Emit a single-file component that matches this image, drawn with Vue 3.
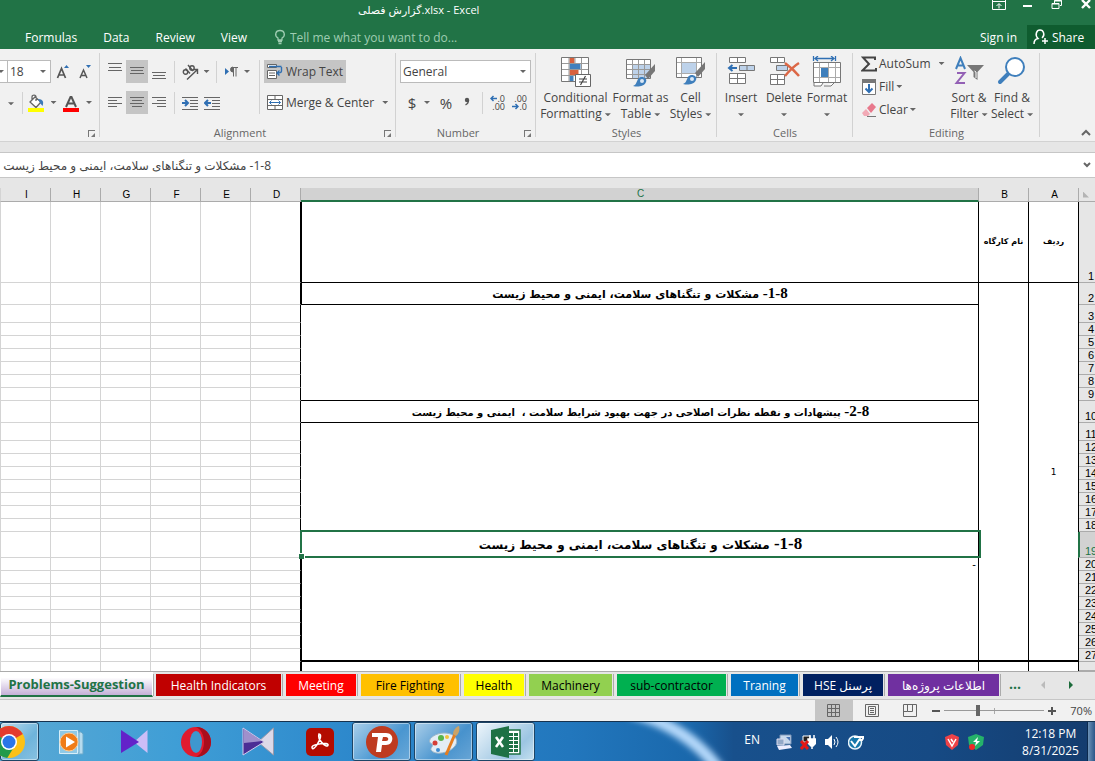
<template>
  <div class="window">
    <header class="title-bar">
      <h1 class="title">گزارش فصلی.xlsx - Excel</h1>
      <div class="window-buttons">
        <button aria-label="Ribbon display options">
          <svg width="14" height="12" viewBox="0 0 14 12"><path d="M.5 0v9.500h13V0M.5 1.500h13M7 8.500V4M4.500 6L7 3.500 9.500 6" fill="none" stroke="#fff" /></svg>
        </button>
        <button aria-label="Minimize">
          <svg width="14" height="12" viewBox="0 0 14 12"><path d="M2 5h9v2H2z" fill="#fff" /></svg>
        </button>
        <button aria-label="Restore">
          <svg width="14" height="12" viewBox="0 0 14 12"><path d="M4.500 3V.500h7v5H10M2 3.500h7v5H2zM4 1h8M2 4h7" fill="none" stroke="#fff" /></svg>
        </button>
        <button aria-label="Close">
          <svg width="14" height="12" viewBox="0 0 14 12"><path d="M3 0l8 8M11 0L3 8" stroke="#fff" stroke-width="2.400" /></svg>
        </button>
      </div>
    </header>

    <nav class="menu">
      <a v-for="item in menu" :key="item" href="#">{{ item }}</a>
      <label class="tell-me">
        <svg width="12" height="16" viewBox="0 0 12 16"><path d="M4 11V9C0 6.500 1.500 1.500 6 1.500S12 6.500 8 9v2zM4 12.500h4M4.500 14.500h3" fill="none" stroke="#9fcdb2" stroke-width="1.300" /></svg>
        <input type="text" placeholder="Tell me what you want to do..." aria-label="Tell me what you want to do" />
      </label>
      <a class="sign-in" href="#">Sign in</a>
      <button class="share">
        <svg width="16" height="16" viewBox="0 0 16 16"><path d="M1 15c0-3 1.500-5 4-5.500C1.500 6 3.500 1 7 1s5.500 5 2 8M9 12h6M12 9v6" fill="none" stroke="#fff" stroke-width="1.500" /></svg>
        Share
      </button>
    </nav>

    <section class="ribbon">
      <div class="group font-group">
        <div class="row">
          <span class="combo-tail"><i class="caret"></i></span>
          <span class="combo size-combo">
            <input v-model="fontSize" type="text" aria-label="Font size" /><i class="caret"></i>
          </span>
          <button class="tool" aria-label="Increase font size">
            <svg width="14" height="16" viewBox="0 0 14 16"><path d="M1.500 14L5.500 4.500 9.500 14M3 11h5" fill="none" stroke="#555" stroke-width="1.700" /><path d="M8 4l2.500-3L13 4z" fill="#2f6fb3" /></svg>
          </button>
          <button class="tool" aria-label="Decrease font size">
            <svg width="14" height="16" viewBox="0 0 14 16"><path d="M2 14l3.500-8L9 14M3.500 11.500h4" fill="none" stroke="#555" stroke-width="1.500" /><path d="M8 1l2.500 3L13 1z" fill="#2f6fb3" /></svg>
          </button>
        </div>
        <div class="row">
          <span class="border-tail"><i class="caret"></i></span>
          <i class="sep"></i>
          <button class="split fill-color" aria-label="Fill color">
            <svg width="18" height="18" viewBox="0 0 18 18"><path d="M3 8l5-5 6 5-5 5.500zM5 6V3c0-2.500 4-2.500 4 0v4" fill="#fff" stroke="#666" stroke-width="1.300" /><path d="M11 5c5 0 6 3 4.500 7L13 9z" fill="#3c7ab8" /><path d="M1 14h16v4H1z" fill="#ff0" /></svg>
            <i class="caret"></i>
          </button>
          <button class="split font-color" aria-label="Font color">
            <svg width="18" height="18" viewBox="0 0 18 18"><path d="M4 13L8.500 3h1L14 13M6 9.500h6" fill="none" stroke="#555" stroke-width="2" /><path d="M1 14h16v4H1z" fill="red" /></svg>
            <i class="caret"></i>
          </button>
        </div>
        <i class="launcher"></i>
      </div>

      <div class="group align-group">
        <div class="columns">
          <div class="align-tools">
            <div class="row">
              <button v-for="a in vertical" :key="a.name" class="align" :class="{ active: a.active }" :aria-label="a.name">
                <svg width="14" height="23" viewBox="0 0 14 23"><path :d="a.path" stroke="#666" /></svg>
              </button>
              <i class="sep"></i>
              <button class="split wide" aria-label="Orientation">
                <svg width="17" height="16" viewBox="0 0 17 16"><g fill="none" stroke="#555" stroke-width="1.400"><circle cx="3.500" cy="8" r="2.200" /><path d="M3.500 4.500L8 9.500M6 1l5 6" /><circle cx="10" cy="4" r="2.200" /><path d="M5 15.500L15 6M11 5.500h4.500V10" /></g></svg>
                <i class="caret"></i>
              </button>
              <i class="sep"></i>
              <button class="split wide" aria-label="Text direction">
                <svg width="14" height="14" viewBox="0 0 14 14"><path d="M0 3l4 3.500L0 10z" fill="#2f6fb3" /><path d="M8 7a2.500 2.500 0 0 1 0-5zM8.500 2v9.500M11 2v9.500M8 2.500h5" fill="#666" stroke="#666" /></svg>
                <i class="caret"></i>
              </button>
            </div>
            <div class="row">
              <button v-for="a in horizontal" :key="a.name" class="align" :class="{ active: a.active }" :aria-label="a.name">
                <svg width="14" height="23" viewBox="0 0 14 23"><path :d="a.path" stroke="#666" /></svg>
              </button>
              <i class="sep"></i>
              <button class="indent" aria-label="Increase indent">
                <svg width="16" height="14" viewBox="0 0 16 14"><path d="M0 1.500h16M8 4.500h8M8 7.500h8M8 10.500h8M0 13.500h16" stroke="#666" /><path d="M0 7h5M3 4l3 3-3 3" fill="none" stroke="#2f6fb3" stroke-width="2" /></svg>
              </button>
              <button class="indent" aria-label="Decrease indent">
                <svg width="16" height="14" viewBox="0 0 16 14"><path d="M0 1.500h16M8 4.500h8M8 7.500h8M8 10.500h8M0 13.500h16" stroke="#666" /><path d="M2 7h5M4 4L1 7l3 3" fill="none" stroke="#2f6fb3" stroke-width="2" /></svg>
              </button>
            </div>
          </div>
          <i class="sep tall"></i>
          <div class="wrap-tools">
            <button class="labelled active">
              <svg width="17" height="16" viewBox="0 0 17 16"><path d="M.5.500h9v3h-9zM.5 6.500h9v8h-9zM2 9h6M2 11.500h6" fill="#fff" stroke="#666" /><path d="M2 2.500h12.500M14.500 3v4c0 2-1.500 2-4 2M12.500 6.500L10 9l2.500 2.500" fill="none" stroke="#2f6fb3" stroke-width="1.400" /></svg>
              Wrap Text
            </button>
            <button class="labelled">
              <svg width="17" height="16" viewBox="0 0 17 16"><path d="M.5.500h15v14H.5zM.5 4.500h15M.5 10.500h15M8 .5v4M8 10.500v4" fill="#fff" stroke="#666" /><path d="M2.500 7.500h11M4.500 5.500l-2 2 2 2M11.500 5.500l2 2-2 2" fill="none" stroke="#2f6fb3" /></svg>
              Merge &amp; Center <i class="caret"></i>
            </button>
          </div>
        </div>
        <span class="group-name">Alignment</span>
        <i class="launcher"></i>
      </div>

      <div class="group number-group">
        <div class="row">
          <span class="combo format-combo">
            <input v-model="format" type="text" aria-label="Number format" /><i class="caret"></i>
          </span>
        </div>
        <div class="row">
          <button class="symbol">$</button>
          <i class="caret"></i>
          <button class="symbol percent">%</button>
          <button class="comma" aria-label="Comma style">
            <svg width="6" height="12" viewBox="0 0 6 12"><circle cx="3" cy="3" r="2.200" fill="#555" /><path d="M4.500 3c0 2.500-1 4-3 4.800" fill="none" stroke="#555" stroke-width="1.400" /></svg>
          </button>
          <i class="sep"></i>
          <button class="decimal" aria-label="Increase decimal">
            <span><svg width="7" height="7" viewBox="0 0 7 7"><path d="M7 3.500H1M3.500 1L1 3.500 3.500 6" fill="none" stroke="#2f6fb3" stroke-width="1.500" /></svg>.0</span>
            <span>.00</span>
          </button>
          <button class="decimal" aria-label="Decrease decimal">
            <span>.00</span>
            <span><svg width="7" height="7" viewBox="0 0 7 7"><path d="M0 3.500h6M3.500 1L6 3.500 3.500 6" fill="none" stroke="#2f6fb3" stroke-width="1.500" /></svg>.0</span>
          </button>
        </div>
        <span class="group-name">Number</span>
        <i class="launcher"></i>
      </div>

      <div class="group styles-group">
        <div class="big-buttons">
          <button class="big conditional">
            <svg width="32" height="32" viewBox="0 0 32 32"><path d="M1.500 1.500h27v24h-27z" fill="#fff" stroke="#777" /><path d="M9.500 2h5v5h-5zM9.500 14h9v5h-9z" fill="#d8603d" /><path d="M9.500 8h11v5h-11zM9.500 20h4v5h-4z" fill="#4180bd" /><path d="M2 7.500h26M2 13.500h26M2 19.500h26M9 2v23M15 2v5M21.500 2v23" stroke="#999" fill="none" /><path d="M15.500 18.500h15v12h-15z" fill="#fff" stroke="#666" /><path d="M19 23h8M19 26h8M25.500 20l-5 9" stroke="#444" stroke-width="1.200" /></svg>
            <span>Conditional<br />Formatting <i class="caret"></i></span>
          </button>
          <button class="big format-table">
            <svg width="32" height="32" viewBox="0 0 32 32"><path d="M1.500 3.500h24v19h-24z" fill="#fff" stroke="#777" /><path d="M8 9h17v13H8z" fill="#bdd2ea" /><path d="M2 8.500h23M2 13.500h23M2 18.500h23M7.500 4v18M13.500 4v18M19.500 4v18" stroke="#999" /><path d="M20 19L30 8v7l-7 8z" fill="#777" /><path d="M8 30c3-1 3-3 5-7 3-4 10-1 8 3-2 5-9 5-13 4z" fill="#3f7fbc" /><circle cx="17" cy="25" r="2" fill="#dbe8f5" /></svg>
            <span>Format as<br />Table <i class="caret"></i></span>
          </button>
          <button class="big cell-styles">
            <svg width="32" height="32" viewBox="0 0 32 32"><path d="M1.500 1.500h25v20h-25z" fill="#fff" stroke="#777" /><path d="M2 6.500h24M2 17.500h24M6.500 2v19M21.500 2v19" stroke="#aaa" /><path d="M7 7h14v10H7z" fill="#bdd2ea" /><path d="M20 17L30 6v7l-7 8z" fill="#777" /><path d="M8 28c3-1 3-3 5-7 3-4 10-1 8 3-2 5-9 5-13 4z" fill="#3f7fbc" /><circle cx="17" cy="23" r="2" fill="#dbe8f5" /></svg>
            <span>Cell<br />Styles <i class="caret"></i></span>
          </button>
        </div>
        <span class="group-name">Styles</span>
      </div>

      <div class="group cells-group">
        <div class="big-buttons">
          <button class="big">
            <svg width="32" height="32" viewBox="0 0 32 32"><path d="M4.500 1.500h16v5h-16zM12.500 1.500v5M4.500 17.500h16v10h-16zM4.500 22.500h16M12.500 17.500v10" fill="#fff" stroke="#777" /><path d="M14.500 9.500h15v5h-15zM22 9.500v5" fill="#bdd2ea" stroke="#777" /><path d="M4 12h8M7.500 9L4 12l3.500 3" fill="none" stroke="#2f6fb3" stroke-width="2" /></svg>
            <span>Insert<br /><i class="caret"></i></span>
          </button>
          <button class="big">
            <svg width="32" height="32" viewBox="0 0 32 32"><path d="M2.500 1.500h14v5h-14zM9.500 1.500v5M2.500 18.500h14v10h-14zM2.500 23.500h14M9.500 18.500v10" fill="#fff" stroke="#777" /><path d="M8.500 9.500h11v5h-11z" fill="#bdd2ea" stroke="#777" /><path d="M17 7c4 3 9 7 14 13M31 7c-5 3-9 7-14 13" fill="none" stroke="#dc6847" stroke-width="2.500" /></svg>
            <span>Delete<br /><i class="caret"></i></span>
          </button>
          <button class="big">
            <svg width="32" height="32" viewBox="0 0 32 32"><path d="M2.500 6.500h27v20h-27z" fill="#fff" stroke="#777" /><path d="M3 11.500h26M3 21.500h26M8.500 7v19M17.500 7v19M24.500 7v19" stroke="#aaa" /><path d="M10 12h7v9h-7z" fill="#3f7fbc" /><path d="M3 27v3h7l2-3M13 30h7l3-3" fill="#fff" stroke="#777" /><path d="M2.500 0v5M24.500 0v5M4 2.500h19M7 0L4 2.500 7 5M20 0l3 2.500L20 5" fill="none" stroke="#2f6fb3" stroke-width="1.300" /></svg>
            <span>Format<br /><i class="caret"></i></span>
          </button>
        </div>
        <span class="group-name">Cells</span>
      </div>

      <div class="group editing-group">
        <div class="columns">
          <div class="small-buttons">
            <button class="labelled sum">
              <svg width="16" height="16" viewBox="0 0 16 16"><path d="M14 4V1.500H2L8 8l-6.500 6.500H15V12" fill="none" stroke="#444" stroke-width="2" /></svg>
              AutoSum <i class="caret"></i>
            </button>
            <button class="labelled">
              <svg width="16" height="16" viewBox="0 0 16 16"><path d="M1.500.500h13v15h-13z" fill="#fff" stroke="#777" /><path d="M1 0h14v4H1z" fill="#777" /><path d="M8 5v8M4.500 9.500L8 13l3.500-3.500" fill="none" stroke="#2f6fb3" stroke-width="2" /></svg>
              Fill <i class="caret"></i>
            </button>
            <button class="labelled">
              <svg width="16" height="16" viewBox="0 0 16 16"><path d="M6 6l5-5 4 4-5 6z" fill="#e8798c" /><path d="M1 11l4-4 4 5-2 2H3z" fill="#f2aab6" /><path d="M6 14.500h9" stroke="#777" /></svg>
              Clear <i class="caret"></i>
            </button>
          </div>
          <div class="big-buttons">
            <button class="big sort">
              <svg width="32" height="32" viewBox="0 0 32 32"><path d="M3 13L7.500 2 12 13M4.500 9.500h6" fill="none" stroke="#3f7fbc" stroke-width="2" /><path d="M4 17h7.500L3.500 27H12" fill="none" stroke="#9360b5" stroke-width="2" /><path d="M14 9h17l-6.500 7v8l-4-3v-5z" fill="#777" /><path d="M21.500 15l1.500 1v6" stroke="#fff" fill="none" /></svg>
              <span>Sort &amp;<br />Filter <i class="caret"></i></span>
            </button>
            <button class="big find">
              <svg width="32" height="32" viewBox="0 0 32 32"><path d="M13 17L4 26" stroke="#3f7fbc" stroke-width="4" stroke-linecap="round" /><circle cx="19" cy="11" r="9" fill="#fff" stroke="#3f7fbc" stroke-width="2" /></svg>
              <span>Find &amp;<br />Select <i class="caret"></i></span>
            </button>
          </div>
        </div>
        <span class="group-name">Editing</span>
      </div>
      <button class="collapse" aria-label="Collapse the ribbon">
        <svg width="10" height="8" viewBox="0 0 10 8"><path d="M1 6l4-4 4 4" fill="none" stroke="#666" stroke-width="2" /></svg>
      </button>
    </section>

    <section class="formula-bar">
      <input v-model="formula" type="text" dir="rtl" aria-label="Formula bar" />
      <button aria-label="Expand formula bar">
        <svg width="8" height="8" viewBox="0 0 8 8"><path d="M1 2l3 3 3-3" fill="none" stroke="#666" stroke-width="2" /></svg>
      </button>
    </section>

    <main class="sheet">
      <table>
        <colgroup>
          <col class="col-first" />
          <col v-for="c in 5" :key="c" class="col-small" />
          <col />
          <col class="col-small" />
          <col class="col-small" />
          <col class="col-head" />
        </colgroup>
        <thead>
          <tr>
            <th v-for="c in columns" :key="c" :class="{ current: c === 'C' }" scope="col">{{ c }}</th>
            <th class="corner"><i></i></th>
          </tr>
        </thead>
        <tbody>
          <tr v-for="row in rows" :key="row.n" :style="{ height: row.h + 'px' }">
            <td v-for="c in 6" :key="c" class="blank"></td>
            <td v-if="row.span" class="cell-c" :class="row.cls" :rowspan="row.span" dir="rtl">
              <template v-if="row.text"><b class="num">{{ row.num }}</b> {{ row.text }}</template>
              <template v-if="row.dash">-</template>
              <div v-if="row.cls === 'selected'" class="selection"></div>
            </td>
            <td v-if="row.b !== undefined" class="cell-ab" :rowspan="row.abSpan">{{ row.b }}</td>
            <td v-if="row.a !== undefined" class="cell-ab" :rowspan="row.abSpan">{{ row.a }}</td>
            <th scope="row" :class="{ current: row.n === 19 }">{{ row.n < 28 ? row.n : '' }}</th>
          </tr>
        </tbody>
      </table>
    </main>

    <nav class="sheet-tabs">
      <button class="current-tab">Problems-Suggestion</button>
      <div v-for="tab in tabs" :key="tab.name" class="tab">
        <button dir="auto" :class="{ dark: tab.dark }" :style="{ width: tab.width + 'px', background: tab.color }">{{ tab.name }}</button>
      </div>
      <button class="more">...</button>
      <button class="arrow left" aria-label="Previous sheet"></button>
      <button class="arrow right" aria-label="Next sheet"></button>
    </nav>

    <footer class="status">
      <button class="view active" aria-label="Normal">
        <svg width="14" height="13" viewBox="0 0 14 13"><path d="M.5.500h12v12H.5zM.5 4.500h12M.5 8.500h12M4.500.500v12M8.500.500v12" fill="none" stroke="#666" /></svg>
      </button>
      <button class="view" aria-label="Page layout">
        <svg width="14" height="13" viewBox="0 0 14 13"><path d="M.5.500h13v12H.5zM3.500 2.500h7v8h-7zM5 4.500h4M5 6.500h4M5 8.500h4" fill="none" stroke="#666" /></svg>
      </button>
      <button class="view" aria-label="Page break preview">
        <svg width="14" height="13" viewBox="0 0 14 13"><path d="M.5.500h13v12H.5zM4.500.500v7h5v-7M.5 7.500h4" fill="none" stroke="#666" /></svg>
      </button>
      <button class="zoom-step minus" aria-label="Zoom out"></button>
      <input v-model="zoom" type="range" min="10" max="190" aria-label="Zoom" />
      <button class="zoom-step plus" aria-label="Zoom in"></button>
      <span class="zoom-value">{{ zoom }}%</span>
    </footer>

    <div class="taskbar">
      <svg class="swoosh" width="160" height="40" viewBox="0 0 160 40">
        <defs><filter id="soft"><feGaussianBlur stdDeviation="3" /></filter></defs>
        <path d="M14 -10Q74 5 106 52" fill="none" stroke="#b4d8fa" stroke-width="12" filter="url(#soft)" />
      </svg>
      <button class="app open chrome" aria-label="Chrome">
        <svg width="32" height="32" viewBox="0 0 32 32"><circle cx="16" cy="16" r="16" fill="#fbc116" /><path d="M16 16L2.200 8a16 16 0 0 1 27.600 0z" fill="#e33b2e" /><path d="M2.200 8a16 16 0 0 0 12 24L22 19.500 16 16z" fill="#229a4a" /><circle cx="16" cy="16" r="8" fill="#fff" /><circle cx="16" cy="16" r="6.500" fill="#2a75e8" /></svg>
      </button>
      <button class="app" aria-label="Media Player">
        <svg width="30" height="28" viewBox="0 0 30 28"><path d="M7 4h17l2 2v20H7zM5 3h17v22H5z" fill="#b6dbee" stroke="#6ba9cb" /><path d="M2.500 2.500h18v23h-18z" fill="#8fc9e6" stroke="#d6eef9" /><circle cx="12" cy="14" r="9" fill="#f07c18" stroke="#ffc98f" /><path d="M9 8.500l9 5.500-9 5.500z" fill="#fff" /></svg>
      </button>
      <button class="app" aria-label="Player">
        <svg width="28" height="26" viewBox="0 0 28 26"><path d="M27.500 1v23L14 13z" fill="#cdbdf7" /><path d="M1 1l18 12L1 24z" fill="#6322c9" /></svg>
      </button>
      <button class="app" aria-label="Opera">
        <svg width="32" height="32" viewBox="0 0 32 32"><ellipse cx="16" cy="16" rx="15" ry="15" fill="#e01b2f" /><path d="M16 1c9 0 15 7 15 15s-6 15-15 15c5-2 8-8 8-15S21 3 16 1z" fill="#a80e1c" /><ellipse cx="16" cy="16" rx="6" ry="11" fill="#3e97cf" /></svg>
      </button>
      <button class="app" aria-label="KMPlayer">
        <svg width="32" height="30" viewBox="0 0 32 30"><path d="M31.500 1v27L16 15z" fill="#ddd9e8" stroke="#99a" /><path d="M1 1l21 14L1 28z" fill="#4b2e95" stroke="#d3cbed" /><path d="M2 2l18 12-18 2z" fill="#c3bbe4" opacity=".7" /></svg>
      </button>
      <button class="app" aria-label="Acrobat">
        <svg width="28" height="28" viewBox="0 0 28 28"><rect width="28" height="28" rx="5" fill="#b30b00" /><path d="M13 6c3 0 1 6-1 9-2 4-6 8-6 4 1-3 17-5 16-2-1 4-11-5-9-11z" fill="none" stroke="#fff" stroke-width="1.600" /></svg>
      </button>
      <button class="app open" aria-label="Psiphon">
        <svg width="32" height="32" viewBox="0 0 32 32"><circle cx="16" cy="16" r="16" fill="#be3b20" /><path d="M6 7h14c9 0 8 12 0 12h-4l-1 7h-5l2-15H6zM17 11l-1 4h4c3 0 3-4 0-4z" fill="#fff" fill-rule="evenodd" /></svg>
      </button>
      <button class="app open" aria-label="Paint">
        <svg width="34" height="34" viewBox="0 0 34 34"><path d="M17 8c12 0 15 8 11 13-5 7-20 10-24 4-1-2 3-4 1-6-7-3 2-11 12-11z" fill="#e3edf5" stroke="#9ab6c9" /><circle cx="14" cy="13" r="3" fill="#59b44c" /><circle cx="8" cy="18" r="2.500" fill="#d53e36" /><circle cx="11" cy="25" r="2" fill="#3c8ad1" /><circle cx="20" cy="12" r="2" fill="#f3c33d" /><path d="M19 30L28 9" stroke="#e47d20" stroke-width="3" /><path d="M26 9c0-4 4-8 6-8 1 3 0 8-3 10z" fill="#c9a368" /></svg>
      </button>
      <button class="app open bright" aria-label="Excel">
        <svg width="32" height="32" viewBox="0 0 32 32"><path d="M16 4h14v24H16z" fill="#fff" stroke="#1e7145" stroke-width="1.500" /><path d="M19 7h4v3h-4zM24 7h4v3h-4zM19 11h4v3h-4zM24 11h4v3h-4zM19 15h4v3h-4zM24 15h4v3h-4zM19 19h4v3h-4zM24 19h4v3h-4zM19 23h4v3h-4zM24 23h4v3h-4z" fill="#1e7145" /><path d="M1 4l18-4v32L1 28z" fill="#1e7145" /><path d="M6 11l7 10M13 11L6 21" stroke="#fff" stroke-width="2.500" /></svg>
      </button>

      <div class="tray">
        <span class="lang">EN</span>
        <svg width="16" height="16" viewBox="0 0 16 16"><path d="M4 1h11v9H4z" fill="#c8d8ec" stroke="#7c95b7" /><path d="M1 5h7v6H1z" fill="#93a9c8" stroke="#dde" /><path d="M1 12l13-1 2 3-13 2z" fill="#eef" /><path d="M10 3h4v4z" fill="#4a74b4" /></svg>
        <svg width="16" height="16" viewBox="0 0 16 16"><path d="M3 2h7v6H3z" fill="#222" stroke="#fff" /><path d="M10 1v4M14 1v4M8 5h8v4l-3 3h-2L8 9zM12 11v4" fill="#fff" stroke="#fff" stroke-width="1.500" /><path d="M1 7l7 8M8 7l-7 8" stroke="#e31717" stroke-width="3" /></svg>
        <svg width="16" height="16" viewBox="0 0 16 16"><path d="M1 5h3l4-4v14l-4-4H1z" fill="#fff" /><path d="M10 5q2 3 0 6M12 3q4 5 0 10" fill="none" stroke="#fff" /></svg>
        <svg class="last-tool" width="16" height="16" viewBox="0 0 16 16"><circle cx="7" cy="8.500" r="6.500" fill="#1778aa" stroke="#e8f4fb" stroke-width="1.500" /><path d="M6 3h10l-2 3h-3l-4 6-4-5" fill="none" stroke="#fff" stroke-width="2" /></svg>
        <svg width="16" height="16" viewBox="0 0 16 16"><path d="M8 0l7 3-1 8-6 5-6-5L1 3z" fill="#ee4247" /><path d="M4 5l4 7 4-7M7 5l2 3" fill="none" stroke="#fff" stroke-width="1.500" /></svg>
        <svg width="16" height="16" viewBox="0 0 16 16"><path d="M8 0l8 3-1 8-7 5-7-5L0 3z" fill="#25b26a" /><path d="M10 3L5 8h3l-1 4 5-5H9z" fill="#fff" /><circle cx="4" cy="13" r="3" fill="#f02828" /></svg>
      </div>
      <div class="clock">12:18 PM<br />8/31/2025</div>
      <button class="show-desktop" aria-label="Show desktop"></button>
    </div>
  </div>
</template>

<script setup>
import { ref } from 'vue'

const fontSize = ref('18')
const format = ref('General')
const formula = ref('1-8- مشکلات و تنگناهای سلامت، ایمنی و محیط زیست')
const zoom = ref(70)

const menu = ['Formulas', 'Data', 'Review', 'View']
const columns = ['I', 'H', 'G', 'F', 'E', 'D', 'C', 'B', 'A']

const vertical = [
  { name: 'Top align', path: 'M0 3.500h14M1 7.500h12M0 10.500h14' },
  { name: 'Middle align', path: 'M0 7.500h14M1 10.500h12M0 13.500h14', active: true },
  { name: 'Bottom align', path: 'M0 12.500h14M1 15.500h12M0 18.500h14' }
]
const horizontal = [
  { name: 'Align left', path: 'M0 6.500h14M0 9.500h9M0 12.500h14M0 15.500h9' },
  { name: 'Center', path: 'M0 6.500h14M2 9.500h10M0 12.500h14M2 15.500h10', active: true },
  { name: 'Align right', path: 'M0 6.500h14M5 9.500h9M0 12.500h14M5 15.500h9' }
]

const problems = 'مشکلات و تنگناهای سلامت، ایمنی و محیط زیست'
const suggestions = 'پیشهادات و نقطه نظرات اصلاحی در جهت بهبود شرایط سلامت ،\u00a0 ایمنی و محیط زیست'

// rows that are not listed here use the default height and have no own C cell
const special = {
  1: { h: 81, span: 1, cls: 'thick', abSpan: 1, b: 'نام کارگاه', a: 'ردیف' },
  2: { h: 22, span: 1, cls: 'thick', num: '1-8-', text: problems, abSpan: 26, b: '', a: '1' },
  3: { h: 18, span: 7 },
  10: { h: 22, span: 1, cls: 'long', num: '2-8-', text: suggestions },
  11: { h: 18, span: 8 },
  19: { h: 26, span: 1, cls: 'selected', num: '1-8-', text: problems },
  20: { h: 13, span: 8, cls: 'thick last', dash: true },
  28: { h: 9, span: 1, cls: 'thick', abSpan: 1, b: '', a: '' }
}
const rows = Array.from({ length: 28 }, (_, i) => ({ n: i + 1, h: 13, ...special[i + 1] }))

const tabs = [
  { name: 'Health Indicators', width: 125, color: '#c00000', dark: true },
  { name: 'Meeting', width: 70, color: '#ff0000', dark: true },
  { name: 'Fire Fighting', width: 98, color: '#ffc000' },
  { name: 'Health', width: 60, color: '#ffff00' },
  { name: 'Machinery', width: 83, color: '#92d050' },
  { name: 'sub-contractor', width: 109, color: '#00b050' },
  { name: 'Traning', width: 67, color: '#0070c0', dark: true },
  { name: 'پرسنل HSE', width: 80, color: '#002060', dark: true },
  { name: 'اطلاعات پروژه‌ها', width: 111, color: '#7030a0', dark: true }
]
</script>

<style>
body {
  margin: 0;
  background: #e6e6e6;
}
</style>

<style scoped>
.window {
  min-height: 100vh;
  display: flex;
  flex-direction: column;
  overflow: hidden;
  font-family: 'Open Sans', 'DejaVu Sans', sans-serif;
  font-size: 12px;
  color: #444;
  background: #e6e6e6;
}

* {
  box-sizing: border-box;
}

button,
input {
  font: inherit;
  color: inherit;
  border: 0;
  padding: 0;
  margin: 0;
  background: none;
  outline: none;
  min-width: 0;
}

button {
  display: flex;
  align-items: center;
  justify-content: center;
  white-space: nowrap;
}

svg {
  display: block;
  flex: none;
}

.title-bar {
  display: flex;
  justify-content: space-between;
  align-items: flex-start;
  height: 25px;
  padding-left: 358px;
  background: #217346;
  color: #fff;
}

.title {
  margin: 0;
  font-size: 11px;
  line-height: 20px;
  font-weight: normal;
}

.window-buttons {
  display: flex;
  gap: 15px;
  padding-right: 2px;
}

.menu {
  display: flex;
  align-items: center;
  height: 24px;
  padding-left: 12px;
  background: #217346;
  color: #fff;
}

.menu a {
  padding: 0 13px;
  color: #fff;
  text-decoration: none;
}

.tell-me {
  display: flex;
  align-items: center;
  gap: 4px;
  margin-left: 14px;
}

.tell-me input {
  width: 190px;
}

.tell-me input::placeholder {
  color: #9fcdb2;
  opacity: 1;
}

.menu .sign-in {
  margin-left: auto;
  padding: 0 10px;
}

.share {
  align-self: stretch;
  width: 68px;
  gap: 3px;
  padding-right: 5px;
  background: #0f5c2f;
}

.ribbon {
  display: flex;
  height: 93px;
  background: #f1f1f1;
  border-bottom: 1px solid #d2d2d2;
}

.group {
  position: relative;
  flex: none;
  display: flex;
  flex-direction: column;
  gap: 8px;
  padding-top: 11px;
}

.group::after {
  content: '';
  position: absolute;
  top: 4px;
  right: 0;
  bottom: 4px;
  width: 1px;
  background: #d2d2d2;
}

.group-name {
  position: absolute;
  left: 0;
  right: 0;
  bottom: 0;
  line-height: 16px;
  text-align: center;
  font-size: 11px;
  color: #666;
}

.align-group .group-name,
.number-group .group-name {
  right: 16px;
}

.launcher {
  position: absolute;
  right: 5px;
  bottom: 4px;
  width: 7px;
  height: 7px;
  border-top: 1px solid #777;
  border-left: 1px solid #777;
}

.launcher::after {
  content: '';
  position: absolute;
  right: 0;
  bottom: 0;
  border: 2px solid #777;
  border-top-color: transparent;
  border-left-color: transparent;
}

.font-group {
  width: 100px;
}

.align-group {
  width: 296px;
}

.number-group {
  width: 140px;
}

.styles-group {
  width: 181px;
}

.cells-group {
  width: 136px;
}

.editing-group {
  width: 187px;
}

.row {
  display: flex;
  align-items: center;
  height: 23px;
}

.columns {
  display: flex;
}

.caret {
  display: inline-block;
  flex: none;
  width: 6px;
  height: 3px;
  vertical-align: middle;
  background: #666;
  clip-path: polygon(0 0, 100% 0, 50% 100%);
}

.sep {
  width: 1px;
  height: 22px;
  background: #d2d2d2;
}

.sep.tall {
  height: 54px;
}

.combo {
  display: flex;
  align-items: center;
  height: 23px;
  padding: 0 4px 0 2px;
  border: 1px solid #bbb;
  background: #fff;
}

.combo input {
  flex: 1;
}

.combo-tail {
  display: flex;
  align-items: center;
  justify-content: flex-end;
  width: 7px;
  height: 23px;
  padding-right: 3px;
  border: 1px solid #bbb;
  border-width: 1px 0;
  background: #fff;
}

.size-combo {
  width: 44px;
}

.tool {
  width: 22px;
  padding-left: 2px;
}

.border-tail {
  width: 22px;
  padding-left: 8px;
}

.split {
  width: 34px;
  gap: 6px;
}

.fill-color {
  width: 37px;
}

.split.wide {
  width: 41px;
  gap: 5px;
}

.align-tools {
  display: flex;
  flex-direction: column;
  gap: 8px;
  width: 159px;
  padding-left: 4px;
}

.align {
  width: 22px;
  height: 23px;
}

.indent {
  width: 22px;
}

.sep + .indent {
  margin-left: 4px;
}

.align-tools .sep {
  margin-left: 4px;
}

.align-tools .split + .sep {
  margin-left: 0;
}

.wrap-tools {
  display: flex;
  flex-direction: column;
  align-items: flex-start;
  gap: 8px;
  padding-left: 4px;
}

.labelled {
  height: 23px;
  gap: 3px;
  padding: 0 6px 0 3px;
}

.wrap-tools .labelled {
  gap: 2px;
  padding: 0 3px;
}

.wrap-tools .caret {
  margin-left: 6px;
}

.active {
  background: #c5c5c5;
}

.number-group {
  padding-left: 4px;
}

.format-combo {
  width: 131px;
}

.symbol {
  width: 24px;
  font-size: 15px;
}

.percent {
  margin-left: 4px;
}

.comma {
  width: 18px;
}

.number-group .sep {
  margin: 0 4px 0 6px;
}

.decimal {
  flex-direction: column;
  align-items: flex-end;
  width: 18px;
  font-size: 9px;
  line-height: 8px;
}

.decimal + .decimal {
  margin-left: 4px;
}

.decimal span {
  display: flex;
  align-items: center;
}

.big-buttons {
  display: flex;
  justify-content: center;
  gap: 5px;
}

.group > .big-buttons {
  margin-top: -4px;
}

.styles-group .big-buttons,
.cells-group .big-buttons {
  padding-right: 2px;
}

.big {
  flex-direction: column;
  width: 38px;
  line-height: 16px;
}

.big span {
  margin-top: 2px;
}

.big.conditional {
  width: 68px;
}

.big.format-table {
  width: 52px;
}

.editing-group .columns {
  margin-top: -8px;
  padding-left: 5px;
}

.editing-group .big-buttons {
  margin-top: 4px;
}

.small-buttons {
  display: flex;
  flex-direction: column;
  align-items: flex-start;
  width: 92px;
}

.small-buttons .labelled {
  gap: 2px;
}

.sum .caret {
  margin-left: 6px;
}

.collapse {
  align-self: flex-end;
  margin: 0 4px 4px auto;
}

.formula-bar {
  display: flex;
  align-items: center;
  justify-content: space-between;
  height: 26px;
  margin: 10px 0;
  padding-right: 4px;
  background: #fff;
  border-top: 1px solid #c6c6c6;
  border-bottom: 1px solid #c6c6c6;
}

.formula-bar input {
  width: 271px;
}

.sheet {
  overflow: hidden;
  background: #fff;
}

table {
  width: calc(100% + 9px);
  table-layout: fixed;
  border-collapse: separate;
  border-spacing: 0;
  font-family: 'Liberation Sans', 'DejaVu Sans', sans-serif;
  font-size: 11px;
  color: #000;
}

.col-first {
  width: 51px;
}

.col-small {
  width: 50px;
}

.col-head {
  width: 25px;
}

th,
td {
  padding: 0;
  line-height: 12px;
}

th {
  font-weight: normal;
  background: #e6e6e6;
  border-right: 1px solid #ababab;
  border-bottom: 1px solid #ababab;
}

thead tr {
  height: 14px;
}

thead th {
  padding-left: 2px;
  font-size: 10px;
}

thead th:first-child,
td:first-child {
  border-left: 1px solid #d4d4d4;
}

th.current {
  background: #d2d2d2;
  color: #217346;
}

thead th.current {
  border-bottom: 2px solid #217346;
}

tbody th {
  vertical-align: bottom;
}

tbody th.current {
  box-shadow: inset 1px 0 #217346, -1px 0 #217346;
}

.corner i {
  display: block;
  width: 6px;
  height: 6px;
  margin-left: 2px;
  background: #b4b4b4;
  clip-path: polygon(0 0, 100% 100%, 0 100%);
}

.blank {
  border-right: 1px solid #d4d4d4;
  border-bottom: 1px solid #d4d4d4;
}

.blank:nth-child(6) {
  border-right-color: #000;
}

.cell-c {
  border-right: 1px solid #000;
  border-bottom: 1px solid #000;
  font-family: 'DejaVu Sans', sans-serif;
  font-size: 11px;
  font-weight: bold;
  line-height: 18px;
  text-align: center;
}

.num {
  font-family: 'Liberation Serif', serif;
  font-size: 15px;
}

.long {
  font-size: 10px;
}

.thick {
  border-left: 1px solid #000;
}

.last {
  border-bottom-width: 2px;
  padding: 0 2px;
  font-family: 'Liberation Sans', sans-serif;
  font-weight: normal;
  line-height: 12px;
  text-align: right;
  vertical-align: top;
}

.selected {
  position: relative;
  font-size: 12px;
}

.selected .num {
  font-size: 17px;
}

.selection {
  position: absolute;
  inset: -2px -2px -1px -2px;
  border: 2px solid #217346;
}

.selection::after {
  content: '';
  position: absolute;
  left: -3px;
  bottom: -3px;
  width: 5px;
  height: 5px;
  background: #217346;
  border: 1px solid #fff;
  border-width: 1px 1px 0 0;
  box-sizing: content-box;
}

.cell-ab {
  border-right: 1px solid #000;
  border-bottom: 1px solid #000;
  font-family: 'DejaVu Sans', sans-serif;
  font-size: 8px;
  font-weight: bold;
  text-align: center;
}

.cell-ab[rowspan='26'] {
  border-bottom-width: 2px;
  font-size: 9px;
  font-weight: normal;
}

tr:last-child td {
  border-bottom: 0;
}

.sheet-tabs {
  display: flex;
  align-items: flex-start;
  height: 29px;
  border-top: 1px solid #ababab;
  border-bottom: 1px solid #c6c6c6;
  font-size: 12px;
  color: #000;
}

.current-tab {
  flex: none;
  width: 153px;
  height: 25px;
  border: 1px solid #fff;
  border-bottom: 2px solid #217346;
  background: linear-gradient(#fff 20%, #c5b0d8);
  color: #217346;
  font-size: 13px;
  font-weight: bold;
}

.tab {
  flex: none;
  margin-top: 2px;
  padding: 0 1px 0 3px;
  border-right: 1px solid #ababab;
}

.current-tab + .tab {
  border-left: 1px solid #ababab;
  padding-left: 2px;
}

.tab button {
  height: 22px;
}

.dark {
  color: #fff;
}

.more {
  width: 28px;
  height: 22px;
  color: #217346;
  font-weight: bold;
  font-size: 14px;
}

.arrow {
  width: 4px;
  height: 8px;
  margin: 9px 0 0 auto;
  background: #1b6b3a;
}

.arrow.left {
  margin-left: 12px;
  background: #bbb;
  clip-path: polygon(100% 0, 100% 100%, 0 50%);
}

.arrow.right {
  margin-right: 22px;
  clip-path: polygon(0 0, 100% 50%, 0 100%);
}

.status {
  display: flex;
  align-items: center;
  justify-content: flex-end;
  height: 21px;
  padding-right: 3px;
  background: #f1f1f1;
}

.view {
  width: 38px;
  height: 21px;
}

.zoom-step {
  position: relative;
  width: 8px;
  height: 8px;
}

.minus {
  margin-left: 3px;
}

.zoom-step::before,
.plus::after {
  content: '';
  position: absolute;
  top: 3px;
  left: 0;
  width: 8px;
  height: 2px;
  background: #555;
}

.plus::after {
  transform: rotate(90deg);
}

input[type='range'] {
  appearance: none;
  width: 100px;
  height: 11px;
  margin: 0 4px;
  background: linear-gradient(#999, #999) center / 100% 1px no-repeat, linear-gradient(#aaa, #aaa) center / 1px 6px no-repeat;
}

input[type='range']::-webkit-slider-thumb {
  appearance: none;
  width: 4px;
  height: 11px;
  background: #666;
}

.zoom-value {
  width: 36px;
  text-align: right;
  font-size: 11px;
}

.taskbar {
  position: relative;
  display: flex;
  align-items: stretch;
  gap: 3px;
  height: 40px;
  border-top: 1px solid #16324f;
  background: linear-gradient(90deg, #5aa9d4 0, #3f9ed6 16%, #2c87cb 33%, #2277bd 52%, #1a68ac 63%, #18508c 67%, #164a84 85%, #143c6e 100%);
}

.swoosh {
  position: absolute;
  left: 616px;
  top: 0;
}

.app {
  flex: none;
  width: 59px;
  border-radius: 3px;
}

.open {
  border: 1px solid #1d4566;
  background: linear-gradient(135deg, rgba(255, 255, 255, 0.6), rgba(255, 255, 255, 0.15) 60%, rgba(255, 255, 255, 0.3));
  box-shadow: inset 0 0 0 1px rgba(255, 255, 255, 0.45);
}

.chrome {
  width: 39px;
  padding-right: 20px;
  justify-content: flex-end;
}

.chrome svg {
  margin-right: -7px;
}

.bright {
  background: linear-gradient(135deg, #eef6fb, #9cc5e2 70%, #c4e0f0);
}

.tray {
  display: flex;
  align-items: center;
  gap: 8px;
  margin-left: auto;
  color: #fff;
}

.lang {
  margin: 0 8px 4px 0;
}

.tray .last-tool {
  margin-right: 72px;
}

.clock {
  width: 97px;
  padding-left: 30px;
  padding-top: 3px;
  line-height: 17px;
  text-align: center;
  white-space: nowrap;
  color: #fff;
}

.show-desktop {
  width: 8px;
  border-left: 1px solid #0c2a4e;
  background: linear-gradient(90deg, #6d93b8, #2b5688);
}
</style>
